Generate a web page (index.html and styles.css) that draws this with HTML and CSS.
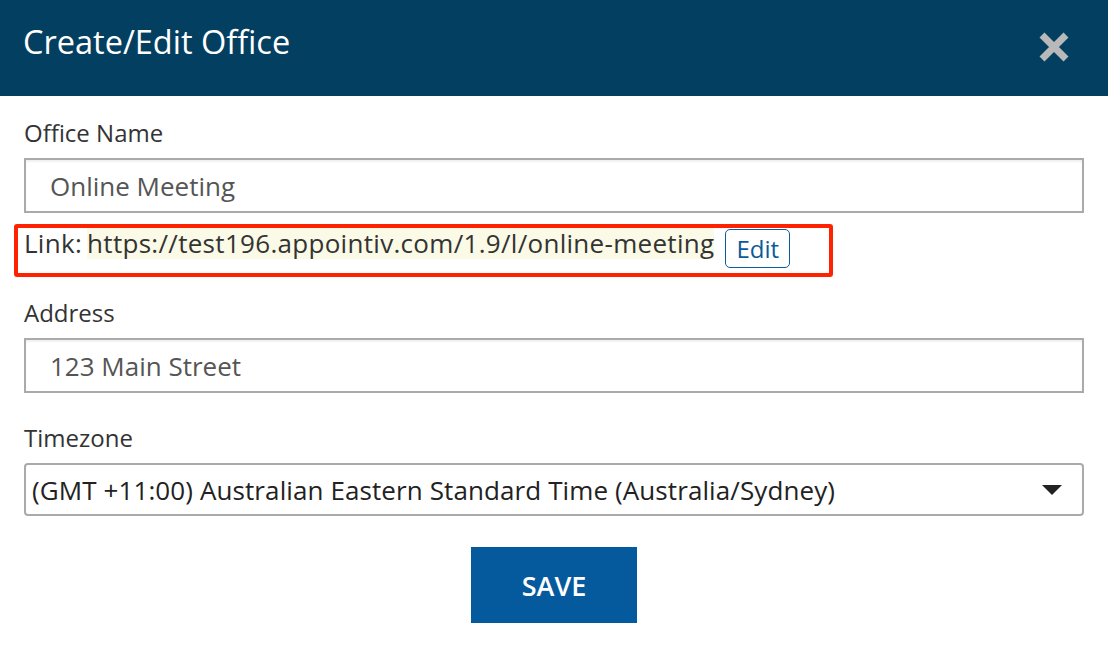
FILE: index.html
```html
<!DOCTYPE html>
<html lang="en">
<head>
<meta charset="utf-8">
<title>Create/Edit Office</title>
<link rel="stylesheet" href="styles.css">
</head>
<body>
<div class="modal">
  <div class="header">
    <h1 class="title">Create/Edit Office</h1>
    <button class="close" aria-label="Close">
      <svg width="32" height="32" viewBox="0 0 32 32"><path d="M4 4 L28 28 M28 4 L4 28" stroke="#b9b9b9" stroke-width="7" stroke-linecap="butt"/></svg>
    </button>
  </div>
  <div class="form">
    <label class="field-label">Office Name</label>
    <div class="input">Online Meeting</div>
    <div class="link-row">
      <span class="link-label">Link:</span>
      <span class="link-url">https://test196.appointiv.com/1.9/l/online-meeting</span>
      <button class="edit-btn">Edit</button>
      <div class="highlight-box"></div>
    </div>
    <label class="field-label gap-top">Address</label>
    <div class="input">123 Main Street</div>
    <label class="field-label gap-top">Timezone</label>
    <div class="select">
      <span>(GMT +11:00) Australian Eastern Standard Time (Australia/Sydney)</span>
      <span class="caret"></span>
    </div>
    <div class="actions">
      <button class="save">SAVE</button>
    </div>
  </div>
</div>
</body>
</html>
```
FILE: styles.css
```css
html, body {
  margin: 0;
  padding: 0;
  background: #ffffff;
}
body {
  font-family: "Open Sans", Lato, sans-serif;
  color: #333333;
}
.header {
  height: 96px;
  box-sizing: border-box;
  background: #033f60;
  display: flex;
  align-items: center;
  justify-content: space-between;
  padding: 0 38px 13px 23px;
}
.title {
  margin: 0;
  color: #ffffff;
  font-size: 32.5px;
  font-weight: 400;
  line-height: 44px;
}
.close {
  background: none;
  border: 0;
  padding: 0;
  margin-top: 10px;
  width: 32px;
  height: 32px;
  display: flex;
}
.form {
  padding: 22px 24px 0 24px;
}
.field-label {
  display: block;
  font-size: 24px;
  line-height: 30px;
  color: #333333;
  margin-bottom: 10px;
}
.gap-top {
  margin-top: 30px;
}
.input {
  height: 55px;
  box-sizing: border-box;
  border: 2px solid #aaaaaa;
  box-shadow: inset 0 2px 2px rgba(0,0,0,0.06);
  padding: 0 24px;
  display: flex;
  align-items: center;
  font-size: 26px;
  color: #555555;
}
.link-row {
  position: relative;
  margin-top: 16px;
  height: 39px;
  display: flex;
  align-items: flex-start;
  font-size: 26px;
  letter-spacing: 0.3px;
  color: #333333;
}
.link-label,
.link-url {
  display: inline-block;
  line-height: 31px;
  margin-top: -1px;
}
.link-label {
  margin-right: 5px;
}
.link-url {
  background: #fafae6;
}
.edit-btn {
  margin-left: 11px;
  height: 39px;
  box-sizing: border-box;
  border: 1.5px solid #0b5c9c;
  border-radius: 5px;
  background: #ffffff;
  color: #0b5a9a;
  font-family: "Open Sans", Lato, sans-serif;
  font-size: 24px;
  line-height: 34px;
  padding: 0 10px;
}
.highlight-box {
  position: absolute;
  left: -10px;
  top: -5px;
  width: 819px;
  height: 53px;
  box-sizing: border-box;
  border: 4px solid #ff2200;
  border-radius: 3px;
  pointer-events: none;
}
.select {
  height: 53px;
  box-sizing: border-box;
  border: 2px solid #aaaaaa;
  border-radius: 4px;
  padding: 0 20px 0 6px;
  display: flex;
  align-items: center;
  justify-content: space-between;
  font-size: 26px;
  letter-spacing: 0.1px;
  color: #222222;
}
.caret {
  width: 0;
  height: 0;
  border-left: 10px solid transparent;
  border-right: 10px solid transparent;
  border-top: 10px solid #222222;
}
.actions {
  display: flex;
  justify-content: center;
  margin-top: 31px;
}
.save {
  width: 166px;
  height: 76px;
  border: 0;
  background: #055a9d;
  color: #ffffff;
  font-family: "Open Sans", Lato, sans-serif;
  font-size: 27px;
  font-weight: 600;
}
```
